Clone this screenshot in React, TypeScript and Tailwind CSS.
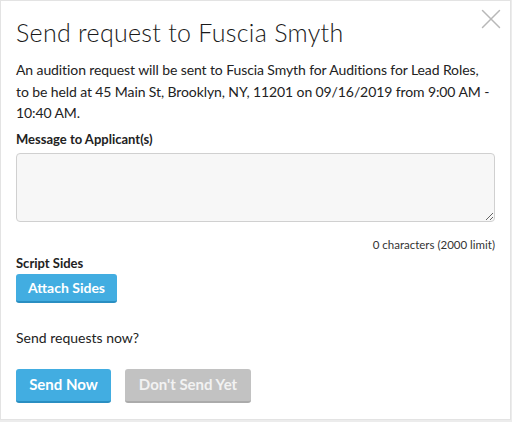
import { X } from "lucide-react";

export default function App() {
  return (
    <div className="w-[512px] h-[422px] bg-[#ececec] font-['Lato',sans-serif] text-[#222]">
      <div className="relative w-[511px] h-[420px] bg-white border border-[#e3e3e3] px-[15px] pt-[15px]">
        <button className="absolute right-[2px] top-[1px] text-[#b8b8b8]">
          <X className="w-[34px] h-[34px]" strokeWidth={1.05} />
        </button>
        <h2 className="text-[25px] leading-[32px] font-light tracking-[0.3px] text-[#1a1a1a]">
          Send request to Fuscia Smyth
        </h2>
        <p className="mt-[11px] text-[14px] leading-[21.5px] whitespace-nowrap tracking-[-0.1px]">
          An audition request will be sent to Fuscia Smyth for Auditions for Lead Roles,
          <br />
          to be held at 45 Main St, Brooklyn, NY, 11201 on 09/16/2019 from 9:00 AM -
          <br />
          10:40 AM.
        </p>
        <label className="block mt-[6px] text-[13px] leading-[18px] font-bold">
          Message to Applicant(s)
        </label>
        <textarea className="block mt-[5px] w-full h-[69px] bg-[#f7f7f7] border border-[#d0d0d0] rounded-[4px] resize-y" />
        <div className="mt-[16px] text-right text-[11.5px] leading-[14px] text-[#333]">
          0 characters (2000 limit)
        </div>
        <div className="mt-[2px] text-[13px] leading-[18px] font-bold">Script Sides</div>
        <button className="mt-[2px] h-[29px] w-[101px] rounded-[3px] bg-[#42ade1] border-b-2 border-[#2a8fc2] text-white text-[14px] font-bold">
          Attach Sides
        </button>
        <p className="mt-[26px] text-[14px] leading-[18px]">Send requests now?</p>
        <div className="mt-[22px] flex gap-[14px]">
          <button className="h-[34px] w-[95px] rounded-[3px] bg-[#42ade1] border-b-2 border-[#2a8fc2] text-white text-[15px] font-bold">
            Send Now
          </button>
          <button className="h-[34px] w-[126px] rounded-[3px] bg-[#c2c2c2] border-b-2 border-[#ababab] text-[#f2f2f2] text-[15px] font-bold">
            Don't Send Yet
          </button>
        </div>
      </div>
    </div>
  );
}
